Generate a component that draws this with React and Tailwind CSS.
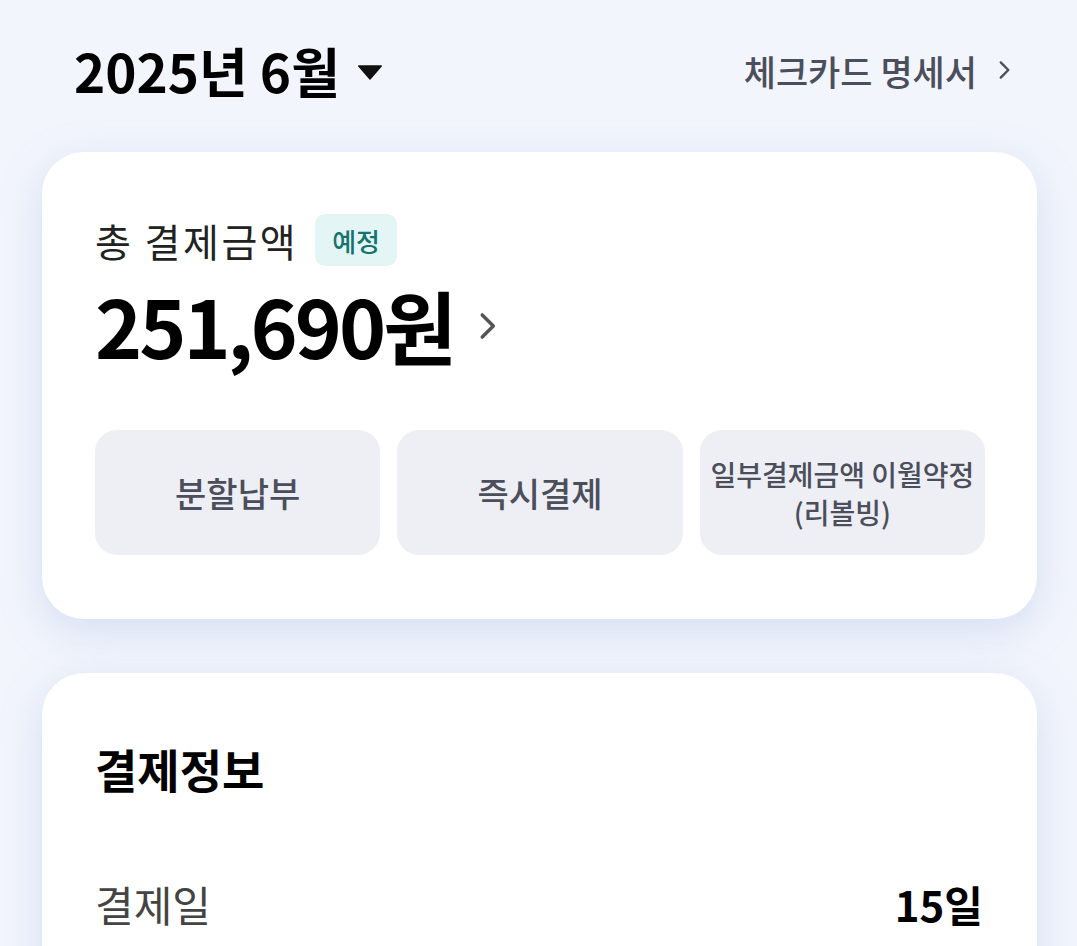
import React from "react";

const ChevronRight = ({ className }) => (
  <svg viewBox="0 0 24 24" className={className} fill="none" stroke="currentColor" strokeWidth="2.2" strokeLinecap="round" strokeLinejoin="round">
    <path d="M9 5l7 7-7 7" />
  </svg>
);

const App = () => {
  return (
    <div
      className="w-[1077px] h-[946px] overflow-hidden bg-[#f2f5fc] text-black"
      style={{ fontFamily: '"Noto Sans CJK KR", "Noto Sans", sans-serif' }}
    >
      {/* header */}
      <div className="flex items-center justify-between pl-[74px] pr-[60px] pt-[32px] h-[108px]">
        <div className="flex items-center gap-[17px]">
          <span className="text-[53px] font-bold leading-none">2025년 6월</span>
          <svg viewBox="0 0 26 16" className="w-[26px] h-[15px] mt-[4px]">
            <path d="M1 1h24L13 15z" fill="#111" stroke="#111" strokeWidth="1.5" strokeLinejoin="round" />
          </svg>
        </div>
        <div className="flex items-center gap-[14px] text-[#4b4e5b]">
          <span className="text-[35px] font-medium leading-none">체크카드 명세서</span>
          <ChevronRight className="w-[26px] h-[26px]" />
        </div>
      </div>

      {/* total card */}
      <div className="ml-[42px] mr-[40px] mt-[44px] bg-white rounded-[42px] shadow-[0_12px_40px_rgba(160,180,225,0.35)] pl-[53px] pr-[52px] pt-[62px] pb-[64px]">
        <div className="flex items-center gap-[17px]">
          <span className="text-[39px] text-[#222] leading-none tracking-[2.5px]">총 결제금액</span>
          <span className="bg-[#e3f6f5] text-[#17736d] text-[26px] font-medium rounded-[10px] px-[17px] h-[52px] flex items-center">
            예정
          </span>
        </div>
        <div className="flex items-center gap-[14px] mt-[18px]">
          <span className="text-[80px] font-bold tracking-[-3px] leading-none">251,690원</span>
          <ChevronRight className="w-[38px] h-[38px] text-[#555] mt-[4px]" />
        </div>
        <div className="grid grid-cols-3 gap-[17px] mt-[66px]">
          <button className="h-[125px] rounded-[22px] bg-[#eeeff5] text-[#4b4e5b] text-[34px] font-medium">
            분할납부
          </button>
          <button className="h-[125px] rounded-[22px] bg-[#eeeff5] text-[#4b4e5b] text-[34px] font-medium">
            즉시결제
          </button>
          <button className="h-[125px] rounded-[22px] bg-[#eeeff5] text-[#4b4e5b] text-[28px] leading-[38px] font-medium">
            일부결제금액 이월약정
            <br />
            (리볼빙)
          </button>
        </div>
      </div>

      {/* info card */}
      <div className="ml-[42px] mr-[40px] mt-[54px] bg-white rounded-t-[42px] shadow-[0_12px_40px_rgba(160,180,225,0.35)] pl-[53px] pr-[54px] pt-[72px] h-[400px]">
        <div className="text-[46px] font-bold leading-none">결제정보</div>
        <div className="flex items-center justify-between mt-[92px]">
          <span className="text-[42px] text-[#444] leading-none">결제일</span>
          <span className="text-[42px] font-bold leading-none">15일</span>
        </div>
      </div>
    </div>
  );
};

export default App;
